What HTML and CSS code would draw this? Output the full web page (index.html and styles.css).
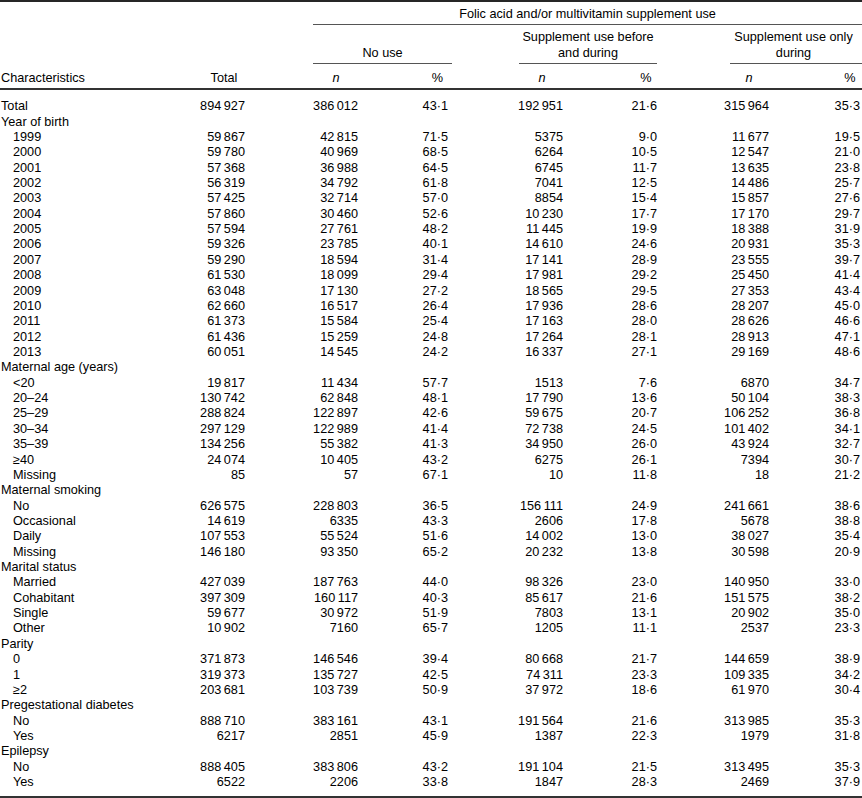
FILE: index.html
```html
<!DOCTYPE html>
<html lang="en">
<head>
<meta charset="utf-8">
<title>Folic acid and/or multivitamin supplement use</title>
<link rel="stylesheet" href="styles.css">
</head>
<body>
<table class="tbl">
<colgroup>
<col class="w1"><col class="w2"><col class="w3"><col class="w4"><col class="w5"><col class="w6"><col class="w7"><col class="w8">
</colgroup>
<thead>
<tr>
<th rowspan="3" class="h-char">Characteristics</th>
<th rowspan="3" class="h-total">Total</th>
<th colspan="6" class="h-top">Folic acid and/or multivitamin supplement use</th>
</tr>
<tr>
<th colspan="2" class="grp"><div class="ul ul-none">No use</div></th>
<th colspan="2" class="grp"><div class="ul ul-before">Supplement use before<br>and during</div></th>
<th colspan="2" class="grp"><div class="ul ul-only">Supplement use only<br>during</div></th>
</tr>
<tr>
<th class="sub s3"><i>n</i></th>
<th class="sub s4">%</th>
<th class="sub s5"><i>n</i></th>
<th class="sub s6">%</th>
<th class="sub s7"><i>n</i></th>
<th class="sub s8">%</th>
</tr>
</thead>
<tbody>
<tr><td class="lbl">Total</td><td>894&thinsp;927</td><td>386&thinsp;012</td><td>43·1</td><td>192&thinsp;951</td><td>21·6</td><td>315&thinsp;964</td><td>35·3</td></tr>
<tr><td class="lbl" colspan="8">Year of birth</td></tr>
<tr><td class="lbl sub-l">1999</td><td>59&thinsp;867</td><td>42&thinsp;815</td><td>71·5</td><td>5375</td><td>9·0</td><td>11&thinsp;677</td><td>19·5</td></tr>
<tr><td class="lbl sub-l">2000</td><td>59&thinsp;780</td><td>40&thinsp;969</td><td>68·5</td><td>6264</td><td>10·5</td><td>12&thinsp;547</td><td>21·0</td></tr>
<tr><td class="lbl sub-l">2001</td><td>57&thinsp;368</td><td>36&thinsp;988</td><td>64·5</td><td>6745</td><td>11·7</td><td>13&thinsp;635</td><td>23·8</td></tr>
<tr><td class="lbl sub-l">2002</td><td>56&thinsp;319</td><td>34&thinsp;792</td><td>61·8</td><td>7041</td><td>12·5</td><td>14&thinsp;486</td><td>25·7</td></tr>
<tr><td class="lbl sub-l">2003</td><td>57&thinsp;425</td><td>32&thinsp;714</td><td>57·0</td><td>8854</td><td>15·4</td><td>15&thinsp;857</td><td>27·6</td></tr>
<tr><td class="lbl sub-l">2004</td><td>57&thinsp;860</td><td>30&thinsp;460</td><td>52·6</td><td>10&thinsp;230</td><td>17·7</td><td>17&thinsp;170</td><td>29·7</td></tr>
<tr><td class="lbl sub-l">2005</td><td>57&thinsp;594</td><td>27&thinsp;761</td><td>48·2</td><td>11&thinsp;445</td><td>19·9</td><td>18&thinsp;388</td><td>31·9</td></tr>
<tr><td class="lbl sub-l">2006</td><td>59&thinsp;326</td><td>23&thinsp;785</td><td>40·1</td><td>14&thinsp;610</td><td>24·6</td><td>20&thinsp;931</td><td>35·3</td></tr>
<tr><td class="lbl sub-l">2007</td><td>59&thinsp;290</td><td>18&thinsp;594</td><td>31·4</td><td>17&thinsp;141</td><td>28·9</td><td>23&thinsp;555</td><td>39·7</td></tr>
<tr><td class="lbl sub-l">2008</td><td>61&thinsp;530</td><td>18&thinsp;099</td><td>29·4</td><td>17&thinsp;981</td><td>29·2</td><td>25&thinsp;450</td><td>41·4</td></tr>
<tr><td class="lbl sub-l">2009</td><td>63&thinsp;048</td><td>17&thinsp;130</td><td>27·2</td><td>18&thinsp;565</td><td>29·5</td><td>27&thinsp;353</td><td>43·4</td></tr>
<tr><td class="lbl sub-l">2010</td><td>62&thinsp;660</td><td>16&thinsp;517</td><td>26·4</td><td>17&thinsp;936</td><td>28·6</td><td>28&thinsp;207</td><td>45·0</td></tr>
<tr><td class="lbl sub-l">2011</td><td>61&thinsp;373</td><td>15&thinsp;584</td><td>25·4</td><td>17&thinsp;163</td><td>28·0</td><td>28&thinsp;626</td><td>46·6</td></tr>
<tr><td class="lbl sub-l">2012</td><td>61&thinsp;436</td><td>15&thinsp;259</td><td>24·8</td><td>17&thinsp;264</td><td>28·1</td><td>28&thinsp;913</td><td>47·1</td></tr>
<tr><td class="lbl sub-l">2013</td><td>60&thinsp;051</td><td>14&thinsp;545</td><td>24·2</td><td>16&thinsp;337</td><td>27·1</td><td>29&thinsp;169</td><td>48·6</td></tr>
<tr><td class="lbl" colspan="8">Maternal age (years)</td></tr>
<tr><td class="lbl sub-l">&lt;20</td><td>19&thinsp;817</td><td>11&thinsp;434</td><td>57·7</td><td>1513</td><td>7·6</td><td>6870</td><td>34·7</td></tr>
<tr><td class="lbl sub-l">20–24</td><td>130&thinsp;742</td><td>62&thinsp;848</td><td>48·1</td><td>17&thinsp;790</td><td>13·6</td><td>50&thinsp;104</td><td>38·3</td></tr>
<tr><td class="lbl sub-l">25–29</td><td>288&thinsp;824</td><td>122&thinsp;897</td><td>42·6</td><td>59&thinsp;675</td><td>20·7</td><td>106&thinsp;252</td><td>36·8</td></tr>
<tr><td class="lbl sub-l">30–34</td><td>297&thinsp;129</td><td>122&thinsp;989</td><td>41·4</td><td>72&thinsp;738</td><td>24·5</td><td>101&thinsp;402</td><td>34·1</td></tr>
<tr><td class="lbl sub-l">35–39</td><td>134&thinsp;256</td><td>55&thinsp;382</td><td>41·3</td><td>34&thinsp;950</td><td>26·0</td><td>43&thinsp;924</td><td>32·7</td></tr>
<tr><td class="lbl sub-l">≥40</td><td>24&thinsp;074</td><td>10&thinsp;405</td><td>43·2</td><td>6275</td><td>26·1</td><td>7394</td><td>30·7</td></tr>
<tr><td class="lbl sub-l">Missing</td><td>85</td><td>57</td><td>67·1</td><td>10</td><td>11·8</td><td>18</td><td>21·2</td></tr>
<tr><td class="lbl" colspan="8">Maternal smoking</td></tr>
<tr><td class="lbl sub-l">No</td><td>626&thinsp;575</td><td>228&thinsp;803</td><td>36·5</td><td>156&thinsp;111</td><td>24·9</td><td>241&thinsp;661</td><td>38·6</td></tr>
<tr><td class="lbl sub-l">Occasional</td><td>14&thinsp;619</td><td>6335</td><td>43·3</td><td>2606</td><td>17·8</td><td>5678</td><td>38·8</td></tr>
<tr><td class="lbl sub-l">Daily</td><td>107&thinsp;553</td><td>55&thinsp;524</td><td>51·6</td><td>14&thinsp;002</td><td>13·0</td><td>38&thinsp;027</td><td>35·4</td></tr>
<tr><td class="lbl sub-l">Missing</td><td>146&thinsp;180</td><td>93&thinsp;350</td><td>65·2</td><td>20&thinsp;232</td><td>13·8</td><td>30&thinsp;598</td><td>20·9</td></tr>
<tr><td class="lbl" colspan="8">Marital status</td></tr>
<tr><td class="lbl sub-l">Married</td><td>427&thinsp;039</td><td>187&thinsp;763</td><td>44·0</td><td>98&thinsp;326</td><td>23·0</td><td>140&thinsp;950</td><td>33·0</td></tr>
<tr><td class="lbl sub-l">Cohabitant</td><td>397&thinsp;309</td><td>160&thinsp;117</td><td>40·3</td><td>85&thinsp;617</td><td>21·6</td><td>151&thinsp;575</td><td>38·2</td></tr>
<tr><td class="lbl sub-l">Single</td><td>59&thinsp;677</td><td>30&thinsp;972</td><td>51·9</td><td>7803</td><td>13·1</td><td>20&thinsp;902</td><td>35·0</td></tr>
<tr><td class="lbl sub-l">Other</td><td>10&thinsp;902</td><td>7160</td><td>65·7</td><td>1205</td><td>11·1</td><td>2537</td><td>23·3</td></tr>
<tr><td class="lbl" colspan="8">Parity</td></tr>
<tr><td class="lbl sub-l">0</td><td>371&thinsp;873</td><td>146&thinsp;546</td><td>39·4</td><td>80&thinsp;668</td><td>21·7</td><td>144&thinsp;659</td><td>38·9</td></tr>
<tr><td class="lbl sub-l">1</td><td>319&thinsp;373</td><td>135&thinsp;727</td><td>42·5</td><td>74&thinsp;311</td><td>23·3</td><td>109&thinsp;335</td><td>34·2</td></tr>
<tr><td class="lbl sub-l">≥2</td><td>203&thinsp;681</td><td>103&thinsp;739</td><td>50·9</td><td>37&thinsp;972</td><td>18·6</td><td>61&thinsp;970</td><td>30·4</td></tr>
<tr><td class="lbl" colspan="8">Pregestational diabetes</td></tr>
<tr><td class="lbl sub-l">No</td><td>888&thinsp;710</td><td>383&thinsp;161</td><td>43·1</td><td>191&thinsp;564</td><td>21·6</td><td>313&thinsp;985</td><td>35·3</td></tr>
<tr><td class="lbl sub-l">Yes</td><td>6217</td><td>2851</td><td>45·9</td><td>1387</td><td>22·3</td><td>1979</td><td>31·8</td></tr>
<tr><td class="lbl" colspan="8">Epilepsy</td></tr>
<tr><td class="lbl sub-l">No</td><td>888&thinsp;405</td><td>383&thinsp;806</td><td>43·2</td><td>191&thinsp;104</td><td>21·5</td><td>313&thinsp;495</td><td>35·3</td></tr>
<tr><td class="lbl sub-l">Yes</td><td>6522</td><td>2206</td><td>33·8</td><td>1847</td><td>28·3</td><td>2469</td><td>37·9</td></tr>
</tbody>
</table>
</body>
</html>
```
FILE: styles.css
```css
html, body {
  margin: 0;
  padding: 0;
  background: #fff;
}

body {
  font-family: "Liberation Sans", Arial, sans-serif;
  font-size: 12.7px;
  line-height: 15.36px;
  color: #000;
}

.tbl {
  width: 862px;
  table-layout: fixed;
  border-collapse: separate;
  border-spacing: 0;
  border-top: 2px solid #262626;
  border-bottom: 2px solid #333;
}

.w1 { width: 190px; }
.w2 { width: 123px; }
.w3 { width: 79px; }
.w4 { width: 60px; }
.w5 { width: 148px; }
.w6 { width: 100px; }
.w7 { width: 100px; }
.w8 { width: 62px; }

th, td {
  padding: 0;
  font-weight: normal;
  white-space: nowrap;
}

/* header */
.h-char {
  text-align: left;
  vertical-align: bottom;
  padding: 0 0 1.5px 1px;
  border-bottom: 2px solid #333;
}

.h-total {
  text-align: center;
  vertical-align: bottom;
  padding: 0 55px 1.5px 0;
  border-bottom: 2px solid #333;
}

.h-top {
  text-align: center;
  padding: 5px 0 2px;
  border-bottom: 1px solid #555;
}

.grp {
  vertical-align: bottom;
  text-align: center;
  padding-top: 5px;
}

.ul {
  padding-bottom: 2px;
  border-bottom: 1px solid #555;
}

.ul-before {
  margin: 0 43px 0 67px;
}

.ul-only {
  margin: 0 0 0 30px;
  padding-right: 5px;
}

.sub {
  text-align: center;
  padding-top: 7px;
  padding-bottom: 1.5px;
  border-bottom: 2px solid #333;
}

.sub i {
  font-style: italic;
}

.s3 { padding-right: 33px; }
.s4 { padding-left: 31px; }
.s5 { padding-left: 32px; }
.s6 { padding-right: 8px; }
.s7 { padding-right: 2px; }
.s8 { padding-left: 38px; }

/* body */
tbody td {
  text-align: right;
}

tbody td:nth-child(2) { padding-right: 68px; }
tbody td:nth-child(3) { padding-right: 34px; }
tbody td:nth-child(4) { padding-right: 4px; }
tbody td:nth-child(5) { padding-right: 37px; }
tbody td:nth-child(6) { padding-right: 43px; }
tbody td:nth-child(7) { padding-right: 31px; }
tbody td:nth-child(8) { padding-right: 2px; }

tbody td.lbl {
  text-align: left;
  padding-left: 1px;
  padding-right: 0;
}

tbody td.sub-l {
  padding-left: 13px;
}

tbody tr:first-child td {
  padding-top: 9.3px;
}

tbody tr:last-child td {
  padding-bottom: 5.3px;
}
```
